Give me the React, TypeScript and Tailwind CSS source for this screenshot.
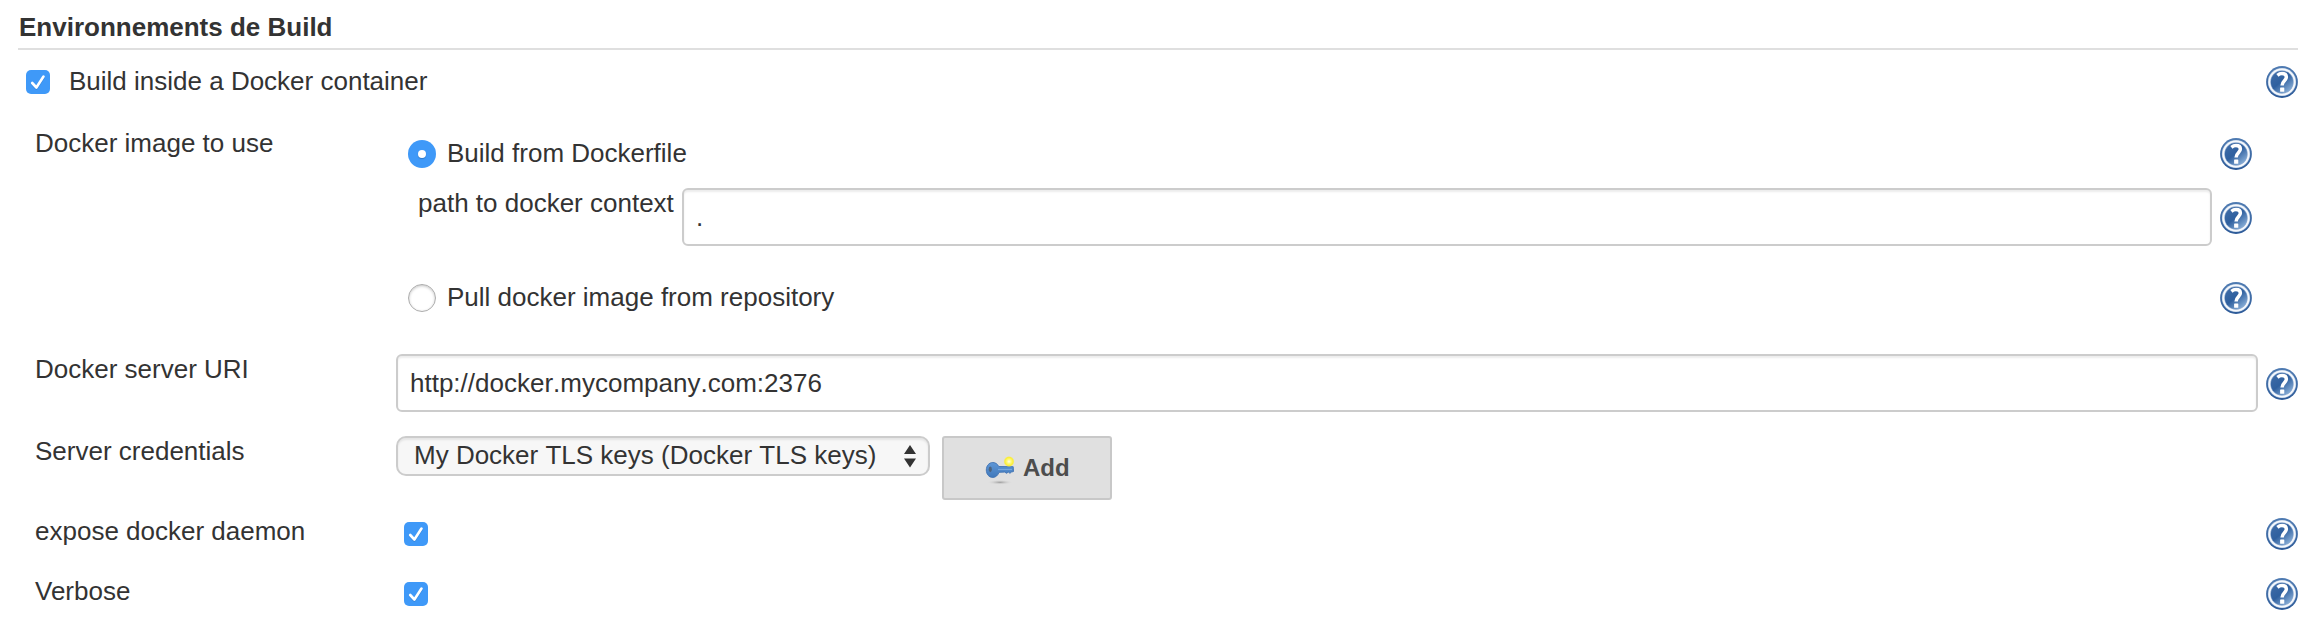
import type { ReactNode } from "react";

function HelpIcon() {
  return (
    <svg width="32" height="32" viewBox="0 0 32 32" className="block shrink-0">
      <defs>
        <linearGradient id="helpFill" x1="0.15" y1="0.1" x2="0.85" y2="0.95">
          <stop offset="0" stopColor="#3c6aa6" />
          <stop offset="0.45" stopColor="#2f609f" />
          <stop offset="1" stopColor="#8db2da" />
        </linearGradient>
        <linearGradient id="helpRing" x1="0" y1="0" x2="0" y2="1">
          <stop offset="0" stopColor="#4f7bb2" />
          <stop offset="1" stopColor="#2c5a98" />
        </linearGradient>
      </defs>
      <circle cx="16" cy="16" r="15.900" fill="url(#helpRing)" />
      <circle cx="16" cy="16" r="14.100" fill="#b9cce3" />
      <circle cx="16" cy="16" r="13.500" fill="#f6f9fd" />
      <circle cx="16" cy="16" r="11.700" fill="#8eabd0" />
      <circle cx="16" cy="16" r="11.100" fill="url(#helpFill)" />
      <path
        d="M11.400 9.300c1.500-1.200 3-1.700 4.600-1.700 2.800 0 4.400 1.400 4.400 3.500 0 3.600-4.300 3.800-4.300 8.300"
        fill="none"
        stroke="#fff"
        strokeWidth="3.500"
      />
      <rect x="14.100" y="21.400" width="4.200" height="4.400" rx="0.600" fill="#fff" />
    </svg>
  );
}

function Checkbox() {
  return (
    <span role="checkbox" aria-checked="true" className="block h-6 w-6 shrink-0 rounded-[5px] bg-[#3f99f8]">
      <svg width="24" height="24" viewBox="0 0 24 24" className="block">
        <path d="M6.200 14l4.200 4.500L17.500 7.500" fill="none" stroke="#2f78c8" strokeWidth="2.600" strokeLinecap="round" strokeLinejoin="round" opacity="0.5" />
        <path d="M6.200 13l4.200 4.500L17.500 6.500" fill="none" stroke="#fff" strokeWidth="2.600" strokeLinecap="round" strokeLinejoin="round" />
      </svg>
    </span>
  );
}

function Radio({ checked = false }: { checked?: boolean }) {
  return checked ? (
    <span role="radio" aria-checked="true" className="flex h-7 w-7 shrink-0 items-center justify-center rounded-full bg-[#3f99f8]">
      <span className="h-2 w-2 rounded-full bg-white shadow-[0_1px_1px_#2f78c8]" />
    </span>
  ) : (
    <span role="radio" aria-checked="false" className="block h-7 w-7 shrink-0 rounded-full border border-[#adadad] bg-white shadow-[inset_0_1px_3px_#c4c4c4]" />
  );
}

function KeyIcon() {
  return (
    <svg width="32" height="34" viewBox="0 0 32 34" className="block shrink-0">
      <defs>
        <radialGradient id="keyShadow">
          <stop offset="0" stopColor="#9c9c9c" />
          <stop offset="1" stopColor="#e0e0e0" stopOpacity="0" />
        </radialGradient>
        <linearGradient id="keyBody" x1="0" y1="0" x2="0" y2="1">
          <stop offset="0" stopColor="#5f97d6" />
          <stop offset="1" stopColor="#4179bb" />
        </linearGradient>
        <radialGradient id="spark">
          <stop offset="0" stopColor="#fffff0" />
          <stop offset="0.350" stopColor="#fffa80" />
          <stop offset="0.750" stopColor="#fbee34" />
          <stop offset="1" stopColor="#f4e860" stopOpacity="0" />
        </radialGradient>
      </defs>
      <ellipse cx="16" cy="30.300" rx="13" ry="2.500" fill="url(#keyShadow)" />
      <path
        d="M8.800 10.500c2.700 0 4.800 1.600 5.900 4l14.500.2.300 4.800-2.200.6-1.300 1.200-1.700-1.200-1.800 1.200-1.700-1.200-5.800.2c-1 2.900-3.300 5.200-6.200 5.200-3.800 0-6.500-3.400-6.500-7.500s2.700-7.500 6.500-7.500z"
        fill="url(#keyBody)"
        stroke="#3f72b2"
        strokeWidth="0.900"
      />
      <path d="M14 17.500h14" stroke="#76a7de" strokeWidth="1.200" />
      <ellipse cx="6.300" cy="17.300" rx="1.600" ry="2.900" fill="#4d6480" />
      <circle cx="25" cy="9.500" r="5.600" fill="url(#spark)" />
    </svg>
  );
}

function Row({ label, className, children }: { label: string; className: string; children: ReactNode }) {
  return (
    <div className={`flex items-start pl-[35px] pr-[26px] ${className}`}>
      <div className="w-[361px] shrink-0 leading-8">{label}</div>
      {children}
    </div>
  );
}

const field =
  "min-w-0 flex-1 h-[58px] rounded-[6px] border-2 border-[#ccc] bg-white px-3 leading-[54px] text-[#333] [font-kerning:none] shadow-[inset_0_2px_2px_rgba(0,0,0,0.075)] outline-none";

export default function App() {
  return (
    <div className="h-[642px] w-[2324px] overflow-hidden bg-white font-['Liberation_Sans',Arial,sans-serif] text-[26px] text-[#333]">
      <h2 className="mx-[18px] mr-[26px] h-[50px] border-b-2 border-[#dfdfdf] pl-px pt-[11px] font-bold leading-8">
        Environnements de Build
      </h2>

      <div className="flex h-[77px] items-start pl-[26px] pr-[26px] pt-4">
        <div className="pt-1">
          <Checkbox />
        </div>
        <div className="-mt-px flex-1 pl-[19px] leading-8">Build inside a Docker container</div>
        <HelpIcon />
      </div>

      <Row label="Docker image to use" className="h-[226px]">
        <div className="flex flex-1 flex-col pr-[46px] pt-[11px]">
          <div className="flex h-[50px] items-start">
            <div className="pl-3 pt-0.5">
              <Radio checked />
            </div>
            <div className="-mt-px flex-1 pl-[11px] leading-8">Build from Dockerfile</div>
            <HelpIcon />
          </div>
          <div className="flex h-[94px] items-start">
            <div className="-mt-px ml-[22px] w-[264px] shrink-0 whitespace-nowrap leading-8">path to docker context</div>
            <input className={field} defaultValue="." />
            <div className="pl-2 pt-[14px]">
              <HelpIcon />
            </div>
          </div>
          <div className="flex items-start">
            <div className="pl-3 pt-0.5">
              <Radio />
            </div>
            <div className="-mt-px flex-1 pl-[11px] leading-8">Pull docker image from repository</div>
            <HelpIcon />
          </div>
        </div>
      </Row>

      <Row label="Docker server URI" className="h-[82px]">
        <div className="flex flex-1 items-start pt-px">
          <input className={field} defaultValue="http://docker.mycompany.com:2376" />
          <div className="pl-2 pt-[14px]">
            <HelpIcon />
          </div>
        </div>
      </Row>

      <Row label="Server credentials" className="h-20">
        <div className="flex items-start gap-3 pt-px">
          <button className="flex h-10 w-[534px] items-start justify-between rounded-[10px] border-2 border-[#ccc] bg-[#f7f7f7] pl-4 pr-3 shadow-[inset_0_2px_2px_rgba(0,0,0,0.075)]">
            <span className="whitespace-nowrap pt-px leading-8 [font-kerning:none]">My Docker TLS keys (Docker TLS keys)</span>
            <svg width="12" height="24" viewBox="0 0 12 24" className="mt-1.5 block">
              <path d="M0 10L6 1l6 9zM0 14.500h12L6 23.500z" fill="#333" />
            </svg>
          </button>
          <button className="flex h-16 w-[170px] items-start rounded-[3px] border-2 border-[#c8c8c8] bg-[#e0e0e0] pl-[40px] pt-[14px] text-[24px] font-bold text-[#4d4d4d]">
            <KeyIcon />
            <span className="pl-[7px] leading-8">Add</span>
          </button>
        </div>
      </Row>

      <Row label="expose docker daemon" className="h-[60px]">
        <div className="flex flex-1 items-start justify-between pl-2 pt-[3px]">
          <div className="pt-1">
            <Checkbox />
          </div>
          <HelpIcon />
        </div>
      </Row>

      <Row label="Verbose" className="h-[60px]">
        <div className="flex flex-1 items-start justify-between pl-2 pt-[3px]">
          <div className="pt-1">
            <Checkbox />
          </div>
          <HelpIcon />
        </div>
      </Row>
    </div>
  );
}
